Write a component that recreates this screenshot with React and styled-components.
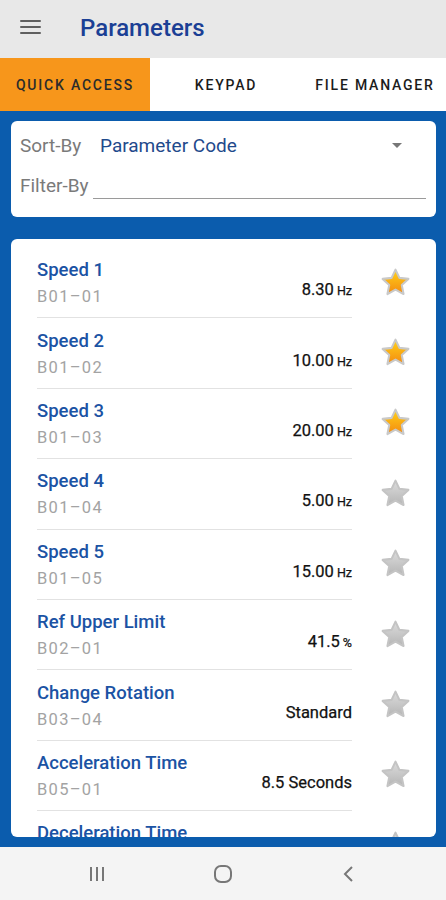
import styled, { createGlobalStyle } from "styled-components";

const GlobalStyle = createGlobalStyle`
  html, body {
    margin: 0;
    padding: 0;
    background: #f3f3f3;
  }
  body {
    font-family: Roboto, "Noto Sans", "Liberation Sans", sans-serif;
  }
`;

const Screen = styled.div`
  width: 446px;
  height: 900px;
  display: flex;
  flex-direction: column;
  overflow: hidden;
`;

const Header = styled.header`
  height: 58px;
  flex: none;
  background: #e8e8e8;
  display: flex;
  align-items: center;
  padding-left: 20px;
  box-sizing: border-box;
`;

const Burger = styled.div`
  width: 21px;
  display: flex;
  flex-direction: column;
  gap: 4px;
  margin-right: 39px;
  margin-top: -5px;

  span {
    height: 2px;
    background: #5f5f5f;
    border-radius: 1px;
  }
`;

const Title = styled.h1`
  margin: -2px 0 0;
  font-size: 24px;
  font-weight: 500;
  color: #1b3f95;
`;

const Tabs = styled.nav`
  height: 53px;
  flex: none;
  display: grid;
  grid-template-columns: 150px 150px 1fr;
  background: #fff;
`;

const Tab = styled.div`
  display: flex;
  align-items: center;
  justify-content: center;
  font-size: 14px;
  font-weight: 500;
  letter-spacing: 1.8px;
  color: ${(p) => (p.$active ? "#2b2b2b" : "#1c1c1c")};
  background: ${(p) => (p.$active ? "#f7961b" : "#fff")};
  padding-left: ${(p) => p.$shift || 0}px;
`;

const Body = styled.main`
  flex: 1;
  min-height: 0;
  background: #0b5cad;
  padding: 10px 10px 10px 11px;
  display: flex;
  flex-direction: column;
  gap: 22px;
`;

const Card = styled.section`
  background: #fff;
  border-radius: 6px;
  box-sizing: border-box;
`;

const FilterCard = styled(Card)`
  height: 96px;
  flex: none;
  padding: 2px 10px 0 9px;
  display: flex;
  flex-direction: column;
`;

const FieldRow = styled.div`
  display: flex;
  align-items: center;
  height: 44px;
  margin-top: ${(p) => p.$top || 0}px;
`;

const Label = styled.span`
  font-size: 19px;
  color: #7a7a7a;
  width: ${(p) => p.$w}px;
  flex: none;
`;

const SelectValue = styled.span`
  flex: 1;
  font-size: 19px;
  color: #1f4a8c;
`;

const Caret = styled.span`
  width: 0;
  height: 0;
  border-left: 5px solid transparent;
  border-right: 5px solid transparent;
  border-top: 5px solid #777;
  margin-right: 24px;
`;

const FilterInput = styled.div`
  flex: 1;
  align-self: flex-end;
  height: 30px;
  margin-bottom: 8px;
  border-bottom: 1.5px solid #9a9a9a;
`;

const ListCard = styled(Card)`
  flex: 1;
  min-height: 0;
  overflow: hidden;
  padding: 9px 0 0 26px;
`;

const Row = styled.div`
  display: flex;
  align-items: center;
  height: 70.4px;
`;

const Info = styled.div`
  width: 315px;
  flex: none;
  height: 100%;
  box-sizing: border-box;
  border-bottom: 1px solid #e2e2e2;
  display: flex;
  align-items: center;
  justify-content: space-between;
`;

const Names = styled.div`
  display: flex;
  flex-direction: column;
  gap: 6px;
`;

const ParamName = styled.span`
  font-size: 18.5px;
  font-weight: 500;
  color: #1b53a4;
`;

const ParamCode = styled.span`
  font-size: 16.5px;
  color: #a3a3a3;
  letter-spacing: 1.3px;
`;

const Value = styled.span`
  font-size: 16.5px;
  font-weight: 400;
  color: #111;
  margin-top: 14px;
  -webkit-text-stroke: 0.25px #111;

  small {
    font-size: 12.5px;
    margin-left: 3px;
  }
`;

const StarBox = styled.div`
  flex: 1;
  display: flex;
  justify-content: center;
  padding-left: 2px;
  margin-top: -2px;
`;

const NavBar = styled.footer`
  height: 53px;
  flex: none;
  background: #f4f4f4;
  display: grid;
  grid-template-columns: repeat(3, 1fr);
  align-items: center;
  justify-items: center;
  padding: 0 34px;
  box-sizing: border-box;
`;

function Star({ on }) {
  const id = on ? "sg-on" : "sg-off";
  return (
    <svg width="33" height="33" viewBox="0 0 32 32">
      <defs>
        <linearGradient id={id} x1="0" y1="0" x2="0" y2="1">
          {on ? (
            <>
              <stop offset="0" stopColor="#ffd21a" />
              <stop offset="1" stopColor="#f48a10" />
            </>
          ) : (
            <>
              <stop offset="0" stopColor="#dcdcdc" />
              <stop offset="1" stopColor="#b5b5b5" />
            </>
          )}
        </linearGradient>
      </defs>
      <path
        d="M16 3.5l3.8 8 8.7 1-6.4 6 1.7 8.7L16 22.9l-7.8 4.3 1.7-8.7-6.4-6 8.7-1z"
        fill={`url(#${id})`}
        stroke={on ? "#c9c9c9" : "#c4c4c4"}
        strokeWidth="2"
        strokeLinejoin="round"
      />
    </svg>
  );
}

const params = [
  { name: "Speed 1", code: "B01–01", value: "8.30", unit: "Hz", fav: true },
  { name: "Speed 2", code: "B01–02", value: "10.00", unit: "Hz", fav: true },
  { name: "Speed 3", code: "B01–03", value: "20.00", unit: "Hz", fav: true },
  { name: "Speed 4", code: "B01–04", value: "5.00", unit: "Hz" },
  { name: "Speed 5", code: "B01–05", value: "15.00", unit: "Hz" },
  { name: "Ref Upper Limit", code: "B02–01", value: "41.5", unit: "%" },
  { name: "Change Rotation", code: "B03–04", value: "Standard" },
  { name: "Acceleration Time", code: "B05–01", value: "8.5 Seconds" },
  { name: "Deceleration Time", code: "B05–02", value: "8.5 Seconds" },
];

export default function App() {
  return (
    <Screen>
      <GlobalStyle />
      <Header>
        <Burger>
          <span />
          <span />
          <span />
        </Burger>
        <Title>Parameters</Title>
      </Header>
      <Tabs>
        <Tab $active>QUICK ACCESS</Tab>
        <Tab $shift={2}>KEYPAD</Tab>
        <Tab $shift={4}>FILE MANAGER</Tab>
      </Tabs>
      <Body>
        <FilterCard>
          <FieldRow>
            <Label $w={80}>Sort-By</Label>
            <SelectValue>Parameter Code</SelectValue>
            <Caret />
          </FieldRow>
          <FieldRow $top={-4}>
            <Label $w={73}>Filter-By</Label>
            <FilterInput />
          </FieldRow>
        </FilterCard>
        <ListCard>
          {params.map((p) => (
            <Row key={p.code}>
              <Info>
                <Names>
                  <ParamName>{p.name}</ParamName>
                  <ParamCode>{p.code}</ParamCode>
                </Names>
                <Value>
                  {p.value}
                  {p.unit && <small>{p.unit}</small>}
                </Value>
              </Info>
              <StarBox>
                <Star on={p.fav} />
              </StarBox>
            </Row>
          ))}
        </ListCard>
      </Body>
      <NavBar>
        <svg width="20" height="18" viewBox="0 0 20 18">
          <path d="M4 2v14M10 2v14M16 2v14" stroke="#777" strokeWidth="2" />
        </svg>
        <svg width="22" height="22" viewBox="0 0 22 22">
          <rect x="3" y="3" width="16" height="16" rx="6" fill="none" stroke="#777" strokeWidth="2" />
        </svg>
        <svg width="16" height="20" viewBox="0 0 16 20">
          <path d="M11 3l-7 7 7 7" fill="none" stroke="#777" strokeWidth="2" />
        </svg>
      </NavBar>
    </Screen>
  );
}
